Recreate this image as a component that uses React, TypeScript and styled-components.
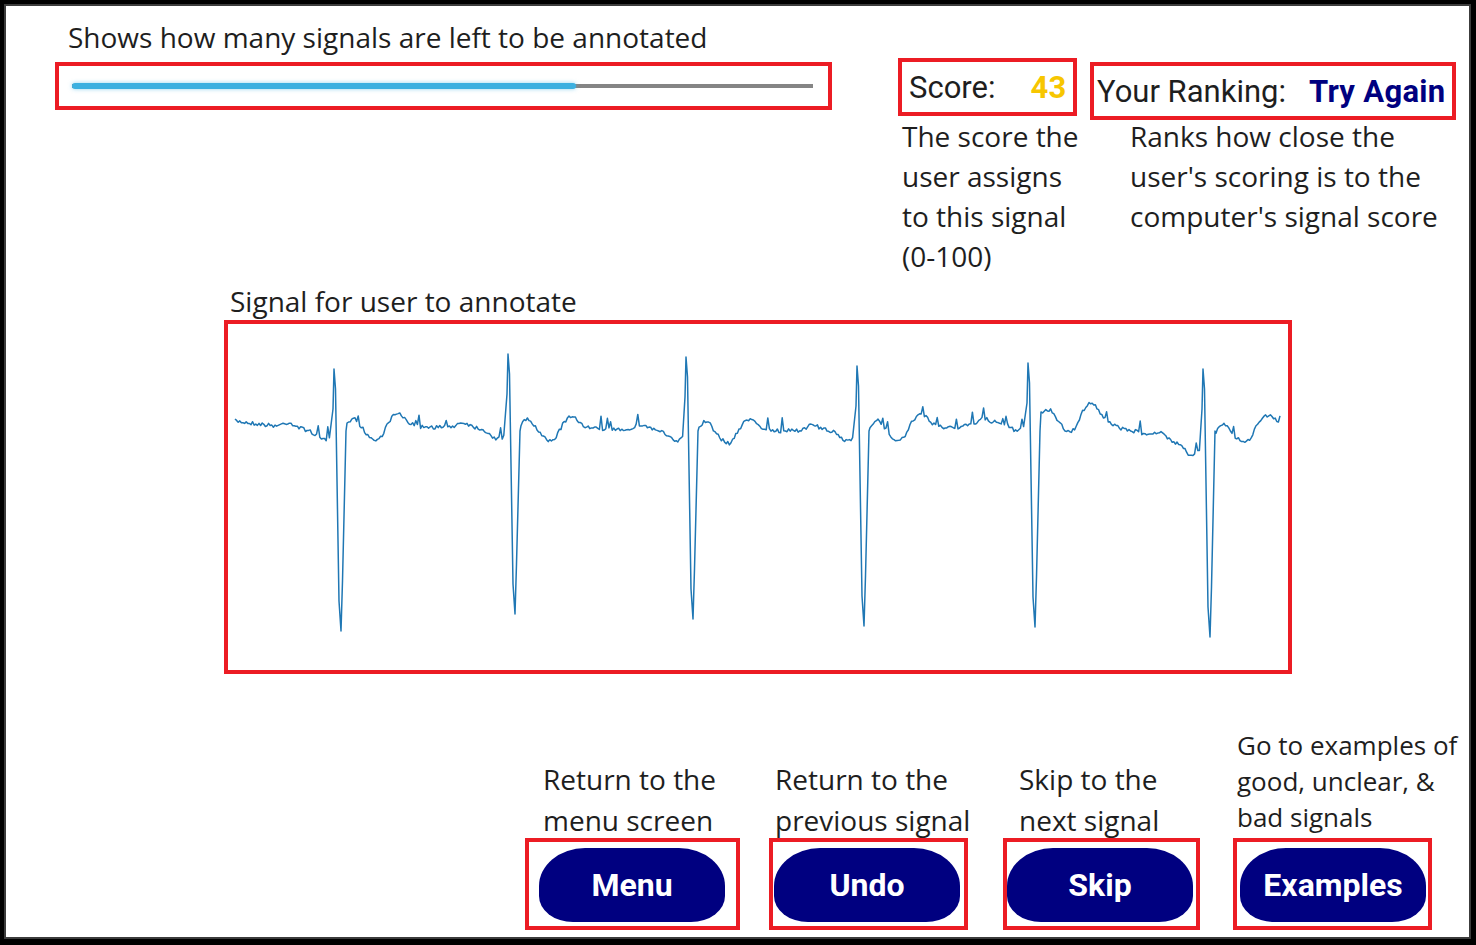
import styled, {createGlobalStyle} from 'styled-components'

const GlobalStyle = createGlobalStyle`
    body {
        margin: 0;
        background: #000;
    }
`

const RED = '#ec1c24'
const NAVY = '#000080'

const Frame = styled.div`
    box-sizing: border-box;
    width: 1467px;
    height: 935px;
    margin: 4px 0 0 4px;
    border: 2px solid #3c3c3c;
    background: #fff;
    display: flex;
    flex-direction: column;
    font-family: 'Open Sans', 'Noto Sans', sans-serif;
    color: #1e1e1e;
    overflow: hidden;
`
const TopRow = styled.div`
    display: flex;
    align-items: flex-start;
    padding-top: 14px;
`
const ProgressCol = styled.div`
    margin-left: 49px;
`
const Caption = styled.div`
    font-size: 28px;
    line-height: 34px;
    padding-left: ${(p: {$indent?: number}) => p.$indent ?? 0}px;
    white-space: nowrap;
`
const ProgressBox = styled.div`
    box-sizing: border-box;
    width: 777px;
    height: 48px;
    margin-top: 8px;
    border: 4px solid ${RED};
    display: flex;
    align-items: center;
    padding: 0 15px 0 13px;
`
const Track = styled.div`
    flex: 1;
    height: 4px;
    background: #858585;
    display: flex;
    align-items: center;
`
const Fill = styled.div<{$pct: number}>`
    width: ${(p) => p.$pct}%;
    height: 6px;
    border-radius: 3px;
    background: #3cb0e0;
    box-shadow: 0 0 4px rgba(60, 176, 224, 0.55);
`
const StatCol = styled.div<{$left: number; $top: number; $width: number}>`
    width: ${(p) => p.$width}px;
    margin-left: ${(p) => p.$left}px;
    margin-top: ${(p) => p.$top}px;
    display: flex;
    flex-direction: column;
`
const StatBox = styled.div<{$padL: number; $gap: number}>`
    box-sizing: border-box;
    height: 58px;
    border: 4px solid ${RED};
    display: flex;
    align-items: center;
    gap: ${(p) => p.$gap}px;
    padding-left: ${(p) => p.$padL}px;
    font-family: Roboto, 'Liberation Sans', sans-serif;
    font-size: 31px;
    white-space: nowrap;
`
const StatLabel = styled.span`
    color: #1e1e1e;
`
const StatValue = styled.span<{$color: string}>`
    color: ${(p) => p.$color};
    font-weight: 700;
    letter-spacing: 0.3px;
`
const Desc = styled.div<{$left: number; $top: number}>`
    margin-left: ${(p) => p.$left}px;
    margin-top: ${(p) => p.$top}px;
    font-size: 28px;
    line-height: 40px;
    white-space: nowrap;
`
const SignalSection = styled.div`
    margin: 8px 0 0 218px;
`
const SignalBox = styled.div`
    box-sizing: border-box;
    width: 1068px;
    height: 354px;
    margin-top: 2px;
    border: 4px solid ${RED};
    svg {
        display: block;
    }
`
const ButtonRow = styled.div`
    margin-top: auto;
    padding: 0 0 7px 519px;
    display: flex;
    align-items: flex-end;
`
const ActionCol = styled.div<{$width: number; $gap: number}>`
    width: ${(p) => p.$width}px;
    margin-right: ${(p) => p.$gap}px;
    display: flex;
    flex-direction: column;
`
const ActionLabel = styled.div<{$indent: number; $small?: boolean}>`
    padding-left: ${(p) => p.$indent}px;
    font-size: ${(p) => (p.$small ? 26 : 28)}px;
    line-height: ${(p) => (p.$small ? 36 : 41)}px;
    margin-bottom: ${(p) => (p.$small ? 3 : -3)}px;
    white-space: nowrap;
`
const ButtonBox = styled.div<{$padL: number}>`
    box-sizing: border-box;
    height: 92px;
    border: 4px solid ${RED};
    padding: 6px 0 4px ${(p) => p.$padL}px;
    display: flex;
`
const Pill = styled.button`
    width: 186px;
    height: 74px;
    border: none;
    border-radius: 46px 46px 34px 34px / 38px 38px 26px 26px;
    background: ${NAVY};
    color: #fff;
    font-family: Roboto, 'Liberation Sans', sans-serif;
    font-weight: 700;
    font-size: 32px;
    padding: 0;
    cursor: pointer;
`

type Beat = {x: number; up: number; dn: number; t: number}

const beats: Beat[] = [
    {x: 334, up: 370, dn: 632, t: 14},
    {x: 508, up: 355, dn: 615, t: 12},
    {x: 686, up: 358, dn: 620, t: 12},
    {x: 857, up: 367, dn: 627, t: 14},
    {x: 1028, up: 364, dn: 628, t: 20},
    {x: 1203, up: 370, dn: 638, t: 12},
]

// slow wander of the baseline, [x, offset]
const drift: [number, number][] = [
    [235, -6], [300, 2], [420, 0], [600, 2], [780, 4], [960, 0],
    [1040, -10], [1100, -4], [1190, 18], [1215, 8], [1260, 0], [1280, -2],
]

const driftAt = (x: number) => {
    for (let i = 0; i < drift.length - 1; i++) {
        const [x0, y0] = drift[i]
        const [x1, y1] = drift[i + 1]
        if (x >= x0 && x <= x1) return y0 + ((y1 - y0) * (x - x0)) / (x1 - x0)
    }
    return 0
}

const gauss = (d: number, mu: number, s: number) => Math.exp(-((d - mu) * (d - mu)) / (2 * s * s))

function buildTrace() {
    let seed = 7
    const rand = () => {
        seed = (seed * 16807) % 2147483647
        return seed / 2147483647
    }
    const pts: string[] = []
    let x = 235
    while (x <= 1280) {
        const beat = beats.find((b) => x >= b.x - 3 && x <= b.x + 12)
        if (beat) {
            const b = beat
            pts.push(`${b.x - 1},${b.up + 40}`, `${b.x},${b.up}`, `${b.x + 1.5},${b.up + 20}`)
            pts.push(`${b.x + 5},${b.dn - 30}`, `${b.x + 7},${b.dn}`, `${b.x + 8.5},${b.dn - 50}`)
            pts.push(`${b.x + 12},432`)
            x = b.x + 13
            continue
        }
        let y = 428 + driftAt(x)
        for (const b of beats) {
            const d = x - b.x
            y += 11 * gauss(d, -10, 8)
            y -= 9 * gauss(d, 20, 5)
            y += 14 * gauss(d, 43, 8)
            y -= b.t * gauss(d, 62, 9)
            y -= 5 * gauss(d, -45, 6)
        }
        y += (rand() - 0.5) * 4
        if (rand() < 0.04) y -= 6 + rand() * 6
        pts.push(`${x.toFixed(1)},${y.toFixed(1)}`)
        x += 1.6
    }
    return pts.join(' ')
}

const trace = buildTrace()

function Ecg() {
    return (
        <svg width="1060" height="346" viewBox="228 325 1060 346">
            <polyline points={trace} fill="none" stroke="#1f77b4" strokeWidth="1.5" strokeLinejoin="round" />
        </svg>
    )
}

const actions = [
    {name: 'Menu', label: ['Return to the', 'menu screen'], width: 215, gap: 29, indent: 18, padL: 10},
    {name: 'Undo', label: ['Return to the', 'previous signal'], width: 199, gap: 35, indent: 6, padL: 1},
    {name: 'Skip', label: ['Skip to the', 'next signal'], width: 197, gap: 33, indent: 16, padL: 0},
    {name: 'Examples', label: ['Go to examples of', 'good, unclear, &', 'bad signals'], width: 199, gap: 0, indent: 4, padL: 3, small: true},
]

function App() {
    return (
        <>
            <GlobalStyle />
            <Frame>
                <TopRow>
                    <ProgressCol>
                        <Caption $indent={13}>Shows how many signals are left to be annotated</Caption>
                        <ProgressBox>
                            <Track>
                                <Fill $pct={68} />
                            </Track>
                        </ProgressBox>
                    </ProgressCol>
                    <StatCol $left={66} $top={38} $width={179}>
                        <StatBox $padL={7} $gap={35}>
                            <StatLabel>Score:</StatLabel>
                            <StatValue $color="#f7c600">43</StatValue>
                        </StatBox>
                        <Desc $left={4} $top={0}>
                            The score the
                            <br />
                            user assigns
                            <br />
                            to this signal
                            <br />
                            (0-100)
                        </Desc>
                    </StatCol>
                    <StatCol $left={13} $top={42} $width={366}>
                        <StatBox $padL={3} $gap={23}>
                            <StatLabel>Your Ranking:</StatLabel>
                            <StatValue $color={NAVY}>Try Again</StatValue>
                        </StatBox>
                        <Desc $left={40} $top={-4}>
                            Ranks how close the
                            <br />
                            user's scoring is to the
                            <br />
                            computer's signal score
                        </Desc>
                    </StatCol>
                </TopRow>
                <SignalSection>
                    <Caption $indent={6}>Signal for user to annotate</Caption>
                    <SignalBox>
                        <Ecg />
                    </SignalBox>
                </SignalSection>
                <ButtonRow>
                    {actions.map((a) => (
                        <ActionCol key={a.name} $width={a.width} $gap={a.gap}>
                            <ActionLabel $indent={a.indent} $small={a.small}>
                                {a.label.map((line) => (
                                    <div key={line}>{line}</div>
                                ))}
                            </ActionLabel>
                            <ButtonBox $padL={a.padL}>
                                <Pill>{a.name}</Pill>
                            </ButtonBox>
                        </ActionCol>
                    ))}
                </ButtonRow>
            </Frame>
        </>
    )
}

export default App
